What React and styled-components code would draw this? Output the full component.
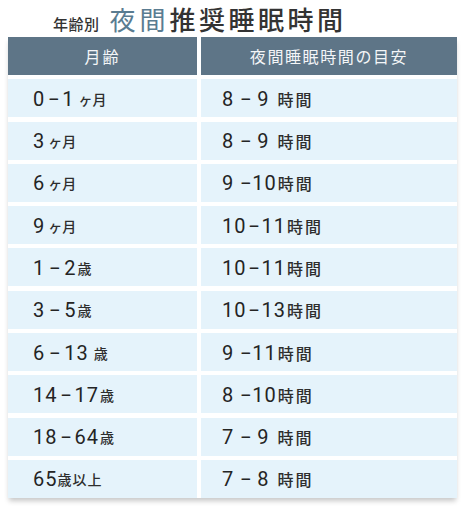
import React from "react";
import styled, { createGlobalStyle } from "styled-components";

const Global = createGlobalStyle`
  html, body { margin: 0; padding: 0; background: #ffffff; }
  body { font-family: "Noto Sans CJK JP", "Noto Sans", sans-serif; color: #333; }
`;

const Page = styled.div`
  width: 464px;
  height: 508px;
  background: #fff;
  display: flex;
  flex-direction: column;
`;

const Title = styled.h1`
  margin: 0;
  height: 37px;
  padding-left: 53px;
  padding-top: 3px;
  display: flex;
  align-items: baseline;
  box-sizing: border-box;
  font-weight: 500;
  font-family: "Noto Sans CJK JP", sans-serif;
  line-height: 32px;
`;

const TitleSmall = styled.span`
  font-size: 15px;
  color: #333;
  letter-spacing: 0.5px;
  margin-right: 10px;
`;

const TitleBig = styled.span`
  font-size: 26px;
  letter-spacing: ${(p) => (p.$accent ? "4px" : "3.5px")};
  color: ${(p) => (p.$accent ? "#5a7c91" : "#333")};
  font-weight: ${(p) => (p.$accent ? 400 : 500)};
`;

const Table = styled.div`
  margin-left: 8px;
  width: 449px;
  display: grid;
  grid-template-columns: 189px 256px;
  column-gap: 4px;
  row-gap: 4.3px;
  grid-auto-rows: 38px;
  box-shadow: 0 4px 5px -1px rgba(0, 0, 0, 0.22);
`;

const HeadCell = styled.div`
  background: #5e7587;
  color: #f4f6f8;
  display: flex;
  align-items: center;
  justify-content: center;
  font-size: 16px;
  letter-spacing: ${(p) => p.$spacing || "1px"};
  font-weight: 400;
`;

const Cell = styled.div`
  background: #e5f3fb;
  display: flex;
  align-items: center;
  padding-left: ${(p) => (p.$right ? "21px" : "25px")};
  padding-top: 1px;
  box-sizing: border-box;
  white-space: nowrap;
`;

const Num = styled.span`
  font-family: Roboto, "Noto Sans", sans-serif;
  font-size: 20px;
  font-weight: 400;
  letter-spacing: 1px;
  color: #242424;
`;

const Dash = styled.span`
  font-family: Roboto, "Noto Sans", sans-serif;
  font-size: 17px;
  font-weight: 500;
  color: #242424;
  margin-left: ${(p) => p.$l};
  margin-right: ${(p) => p.$r};
`;

const Unit = styled.span`
  font-family: "Noto Sans CJK JP", sans-serif;
  font-size: ${(p) => p.$size || "14px"};
  font-weight: 500;
  letter-spacing: ${(p) => p.$spacing || "0px"};
  margin-left: ${(p) => p.$gap || "1px"};
  color: #2e2e2e;
`;

const rows = [
  {
    left: { a: "0", b: "1", dl: "3px", dr: "3px", unit: "ヶ月", ug: "4px" },
    right: { a: "8", b: "9", dl: "6px", dr: "6px", ug: "8px" },
  },
  {
    left: { a: "3", unit: "ヶ月", ug: "3px" },
    right: { a: "8", b: "9", dl: "6px", dr: "6px", ug: "8px" },
  },
  {
    left: { a: "6", unit: "ヶ月", ug: "3px" },
    right: { a: "9", b: "10", dl: "6px", dr: "1px", ug: "1px" },
  },
  {
    left: { a: "9", unit: "ヶ月", ug: "3px" },
    right: { a: "10", b: "11", dl: "2px", dr: "2px", ug: "1px" },
  },
  {
    left: { a: "1", b: "2", dl: "4px", dr: "4px", unit: "歳", ug: "1px" },
    right: { a: "10", b: "11", dl: "2px", dr: "2px", ug: "1px" },
  },
  {
    left: { a: "3", b: "5", dl: "4px", dr: "4px", unit: "歳", ug: "1px" },
    right: { a: "10", b: "13", dl: "2px", dr: "2px", ug: "1px" },
  },
  {
    left: { a: "6", b: "13", dl: "4px", dr: "4px", unit: "歳", ug: "5px" },
    right: { a: "9", b: "11", dl: "6px", dr: "1px", ug: "1px" },
  },
  {
    left: { a: "14", b: "17", dl: "3px", dr: "3px", unit: "歳", ug: "1px" },
    right: { a: "8", b: "10", dl: "6px", dr: "1px", ug: "1px" },
  },
  {
    left: { a: "18", b: "64", dl: "3px", dr: "3px", unit: "歳", ug: "1px" },
    right: { a: "7", b: "9", dl: "6px", dr: "6px", ug: "8px" },
  },
  {
    left: { a: "65", unit: "歳以上", ug: "0px", us: "1px" },
    right: { a: "7", b: "8", dl: "6px", dr: "6px", ug: "8px" },
  },
];

function Range({ a, b, dl, dr }) {
  return (
    <>
      <Num>{a}</Num>
      {b !== undefined && (
        <>
          <Dash $l={dl} $r={dr}>–</Dash>
          <Num>{b}</Num>
        </>
      )}
    </>
  );
}

export default function App() {
  return (
    <Page>
      <Global />
      <Title>
        <TitleSmall>年齢別</TitleSmall>
        <TitleBig $accent>夜間</TitleBig>
        <TitleBig>推奨睡眠時間</TitleBig>
      </Title>
      <Table>
        <HeadCell $spacing="2px">月齢</HeadCell>
        <HeadCell $spacing="1.6px">夜間睡眠時間の目安</HeadCell>
        {rows.map((r, i) => (
          <React.Fragment key={i}>
            <Cell>
              <Range {...r.left} />
              <Unit $gap={r.left.ug} $spacing={r.left.us}>
                {r.left.unit}
              </Unit>
            </Cell>
            <Cell $right>
              <Range {...r.right} />
              <Unit $size="16px" $gap={r.right.ug} $spacing="2px">
                時間
              </Unit>
            </Cell>
          </React.Fragment>
        ))}
      </Table>
    </Page>
  );
}
